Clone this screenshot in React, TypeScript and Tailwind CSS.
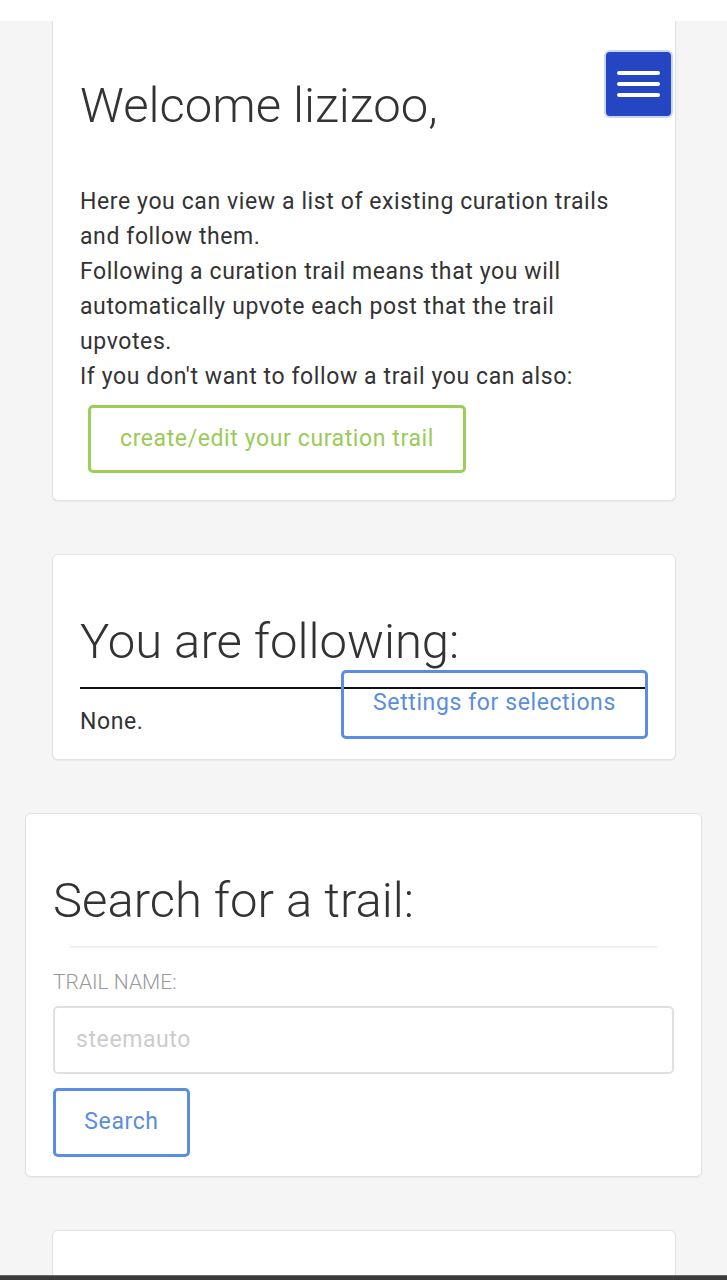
import React from "react";

const font = { fontFamily: "Roboto, 'Liberation Sans', sans-serif" };

export default function App() {
  return (
    <div className="min-h-[1280px] bg-[#f5f5f5] text-[#333]" style={font}>
      <div className="h-[21px] bg-white" />
      {/* Card 1 */}
      <div className="relative ml-[52px] w-[624px] rounded-b-[6px] border-x border-b border-[#e2e2e2] bg-white px-[27px] pb-[27px] pt-[58px] shadow-[0_1px_2px_rgba(0,0,0,0.05)]">
        <button className="absolute right-[2px] top-[29px] flex h-[68px] w-[69px] flex-col items-center justify-center gap-[7px] rounded-[6px] border-2 border-[#c9d5f5] bg-[#2446c2]">
          <span className="h-[4px] w-[43px] rounded-full bg-white" />
          <span className="h-[4px] w-[43px] rounded-full bg-white" />
          <span className="h-[4px] w-[43px] rounded-full bg-white" />
        </button>
        <h1 className="text-[49px] font-light leading-[1.1]">Welcome lizizoo,</h1>
        <p className="mt-[51px] text-[23px] leading-[35px] tracking-[0.6px]">
          Here you can view a list of existing curation trails
          <br />
          and follow them.
          <br />
          Following a curation trail means that you will
          <br />
          automatically upvote each post that the trail
          <br />
          upvotes.
          <br />
          If you don't want to follow a trail you can also:
        </p>
        <button className="ml-[8px] mt-[11px] flex h-[68px] items-center whitespace-nowrap rounded-[5px] border-[3px] border-[#9ccf55] px-[29px] text-[23px] tracking-[0.6px] text-[#9acb58]">
          create/edit your curation trail
        </button>
      </div>

      {/* Card 2 */}
      <div className="ml-[52px] mt-[53px] w-[624px] rounded-[6px] border border-[#e2e2e2] bg-white px-[27px] pb-[20px] pt-[60px] shadow-[0_1px_2px_rgba(0,0,0,0.05)]">
        <h2 className="text-[49px] font-light leading-[1.1]">You are following:</h2>
        <div className="mt-[18px] h-[2px] bg-[#111]" />
        <div className="flex items-start justify-between">
          <span className="mt-[21px] text-[23px] leading-[24px] tracking-[0.6px]">None.</span>
          <button className="mt-[-19px] flex h-[69px] w-[307px] items-start justify-center whitespace-nowrap rounded-[5px] border-[3px] border-[#5b8ee0] pt-[17px] text-[23px] leading-[26px] tracking-[0.6px] text-[#5b8ddf]">
            Settings for selections
          </button>
        </div>
      </div>

      {/* Card 3 */}
      <div className="ml-[25px] mt-[53px] w-[677px] rounded-[6px] border border-[#e2e2e2] bg-white px-[27px] pb-[19px] pt-[60px] shadow-[0_1px_2px_rgba(0,0,0,0.05)]">
        <h2 className="text-[49px] font-light leading-[1.1]">Search for a trail:</h2>
        <div className="mx-[17px] mt-[18px] h-[2px] bg-[#f0f0f0]" />
        <div className="mt-[22px] text-[21px] font-light uppercase leading-[24px] text-[#999]">Trail name:</div>
        <input
          className="mt-[12px] block h-[68px] w-full rounded-[5px] border-2 border-[#e0e0e0] px-[21px] text-[23px] tracking-[0.6px] text-[#333] outline-none placeholder:text-[#cccccc]"
          placeholder="steemauto"
          style={font}
        />
        <button className="mt-[14px] flex h-[69px] w-[137px] items-center justify-center rounded-[5px] border-[3px] border-[#5b8ee0] text-[23px] tracking-[0.6px] text-[#5b8ddf]">
          Search
        </button>
      </div>

      {/* Card 4 */}
      <div className="ml-[52px] mt-[53px] h-[120px] w-[624px] rounded-t-[6px] border border-[#e2e2e2] bg-white" />

      <div className="fixed bottom-0 left-0 h-[5px] w-full border-t border-[#666] bg-[#3b3b3b]" />
    </div>
  );
}
